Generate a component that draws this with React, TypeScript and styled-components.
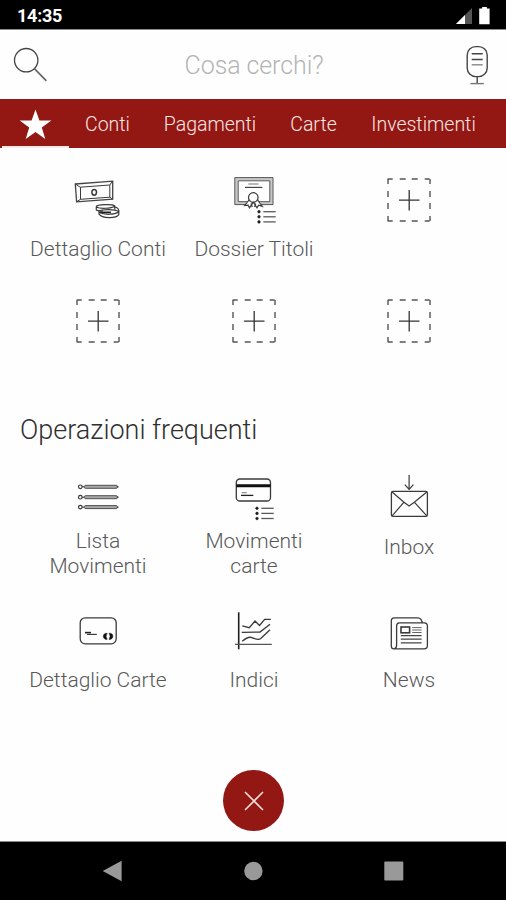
import React from "react";
import styled, { createGlobalStyle } from "styled-components";

const RED = "#931713";
const INK = "#3a3a3a";

const GlobalStyle = createGlobalStyle`
  * { box-sizing: border-box; }
  body { margin: 0; background: #fefefe; font-family: Roboto, "Liberation Sans", sans-serif; }
  svg { display: block; flex: none; }
`;

const Screen = styled.div`
  width: 506px;
  height: 900px;
  display: flex;
  flex-direction: column;
  background: #fefefe;
  overflow: hidden;
`;

const StatusBar = styled.header`
  height: 29px;
  flex: none;
  display: flex;
  align-items: center;
  justify-content: space-between;
  padding: 3px 16px 0 17px;
  background: #000;
`;

const Clock = styled.span`
  color: #fff;
  font-size: 18px;
  font-weight: 700;
  line-height: 20px;
  letter-spacing: -0.25px;
`;

const StatusIcons = styled.div`
  display: flex;
  gap: 7px;
  height: 24px;
`;

const SearchBar = styled.div`
  height: 70px;
  flex: none;
  display: flex;
  align-items: center;
  justify-content: space-between;
  padding: 0 17px 0 13px;
  border-top: 1px solid #8b8b8b;
`;

const Placeholder = styled.span`
  font-size: 25px;
  font-weight: 300;
  line-height: 30px;
  letter-spacing: -0.1px;
  color: #b4b4b4;
  margin: 3px 6px 0 0;
`;

const TabBar = styled.nav`
  height: 49px;
  flex: none;
  display: flex;
  padding-left: 2px;
  background: ${RED};
`;

const Tab = styled.div<{ $width: number; $active?: boolean }>`
  width: ${(p) => p.$width}px;
  flex: none;
  display: flex;
  align-items: center;
  justify-content: center;
  padding-top: 4px;
  border-bottom: 2px solid ${(p) => (p.$active ? "#fbe9e7" : "transparent")};
  color: #fbe6e4;
  font-size: 19.5px;
  font-weight: 300;
  white-space: nowrap;
`;

const Main = styled.main`
  flex: 1;
  display: flex;
  flex-direction: column;
  align-items: center;
`;

const TileGrid = styled.section<{ $rows: string; $top: number }>`
  display: grid;
  grid-template-columns: 156px 156px 154px;
  grid-template-rows: ${(p) => p.$rows};
  margin-top: ${(p) => p.$top}px;
  width: 466px;
`;

const TileBox = styled.div`
  display: flex;
  flex-direction: column;
  align-items: center;
`;

const Label = styled.span<{ $gap: number }>`
  margin-top: ${(p) => p.$gap}px;
  font-size: 21px;
  font-weight: 300;
  line-height: 25px;
  text-align: center;
  white-space: pre-line;
  color: #585858;
`;

const SectionTitle = styled.h2`
  align-self: flex-start;
  margin: 47px 0 0 20px;
  font-size: 27px;
  font-weight: 300;
  line-height: 32px;
  color: #303030;
`;

const CloseButton = styled.button`
  width: 61px;
  height: 61px;
  margin: auto 0 10px 1px;
  padding: 0;
  border: 0;
  border-radius: 50%;
  display: flex;
  align-items: center;
  justify-content: center;
  background: ${RED};
`;

const NavBar = styled.footer`
  height: 59px;
  flex: none;
  display: flex;
  align-items: center;
  justify-content: space-between;
  padding: 0 102px;
  border-top: 1px solid #8b8b8b;
  background: #000;
`;

function Glyph({ children, shift = 0 }: { children: React.ReactNode; shift?: number }) {
  return (
    <svg width="48" height="48" viewBox={`${-shift} 0 48 48`} fill="none" stroke={INK} strokeWidth="1.2">
      {children}
    </svg>
  );
}

function AddSlot() {
  return (
    <Glyph>
      <g stroke="#555" strokeWidth="1.4" strokeDasharray="5 7 6 6 6 7 5 0">
        <path d="M2.7 3H44.7" />
        <path d="M2.7 45H44.7" />
        <path d="M3 3V45" />
        <path d="M45 3V45" />
      </g>
      <path d="M14 24.2H34.5M24.2 14V34.5" stroke="#333" strokeWidth="1.3" />
    </Glyph>
  );
}

function Banknotes() {
  return (
    <Glyph>
      <path d="M1.3 8 38.7 5.2V23.2L2.6 25.8Z" stroke="#444" strokeWidth="1.3" />
      <path d="M1.3 8 6.2 11.2 35.8 9V21.2L6.5 23.3V11.2M35.8 9 38.7 5.2M38.7 23.2 35.8 21.2M2.6 25.8 6.5 23.3" strokeWidth="1" />
      <ellipse cx="20.2" cy="16.3" rx="2.3" ry="2.9" strokeWidth="1.5" />
      <path d="M22.3 30.5C23 28.6 38 27.8 40.8 30V33.6M22.3 30.5V34C24 35.4 27 35 29 34.8M22.3 31C26 33 37 32.6 40.8 30.2" />
      <path d="M25 35.2C28 33.2 41 33 44.8 35.6V38.6C42 42.8 28 42.6 25 38.2ZM25 36.2C30 39 40 39 44.8 36" />
      <path d="M26 36.4H37" strokeWidth="1.8" stroke="#222" />
      <path d="M40.5 31C44 31.5 45 33.5 44.8 35.6" />
    </Glyph>
  );
}

function ListMark({ x, y }: { x: number; y: number }) {
  return (
    <>
      {[0, 5.1, 10.2].map((d) => (
        <g key={d}>
          <circle cx={x} cy={y + d} r="1.3" fill="#222" stroke="#222" strokeWidth="0.6" />
          <path d={`M${x + 4.3} ${y + d}h12.4`} stroke="#5a5a5a" strokeWidth="1.3" />
        </g>
      ))}
    </>
  );
}

function Certificate() {
  return (
    <Glyph>
      <path d="M16 27.2H6.4V3H41.4V27.2H31" stroke="#c8c8c8" strokeWidth="3" />
      <path d="M15.5 28.6H4.8V1.6H43V28.6H31M17.5 25.7H8.2V4.8H39.8V25.7H29" stroke="#555" strokeWidth="1" />
      <path d="M18.3 8H28.5" stroke="#888" />
      <path d="M15 11.4H32.3" stroke="#444" />
      <circle cx="23.3" cy="21.5" r="4.8" />
      <path d="M19 24 14.7 29.5 18 29.2 19.5 31.8 23.3 26.2 27 31.8 28.6 29.2 32.3 30.4 27.7 24M21 27.5 22.3 31M25.7 27.5 24.5 31" />
      <ListMark x={29} y={35.7} />
    </Glyph>
  );
}

function BulletList() {
  return (
    <Glyph>
      {[13.8, 24.2, 34.1].map((y) => (
        <g key={y}>
          <circle cx="6.3" cy={y} r="1.8" strokeWidth="1.2" />
          <path d={`M8.2 ${y}h2`} />
          <rect x="10.6" y={y - 1.5} width="32.6" height="3" rx="0.8" fill="#a9a9a9" stroke="#505050" strokeWidth="1" />
          <path d={`M43 ${y}h1.6`} />
        </g>
      ))}
    </Glyph>
  );
}

function CardList() {
  return (
    <Glyph>
      <rect x="6.3" y="6" width="34.2" height="22" rx="3.6" strokeWidth="1.3" />
      <path d="M6.3 12.7H40.5" stroke="#111" strokeWidth="3" />
      <path d="M11 22.4H23.3" stroke="#222" strokeWidth="1.3" />
      <path d="M11.7 19.7H16.7" stroke="#888" />
      <ListMark x={27} y={35.3} />
    </Glyph>
  );
}

function Inbox() {
  return (
    <Glyph shift={0.8}>
      <rect x="5.6" y="18.4" width="36" height="25" rx="1.6" strokeWidth="1.3" />
      <path d="M6.3 19 18.2 29.2 23.3 33 28.5 29.2 41 19M18.2 29.2 6.3 42.8M28.5 29.2 41 42.8" />
      <path d="M23.3 2V16M19 11.6 23.3 16.3 27.6 11.6" />
    </Glyph>
  );
}

function CardDetail() {
  return (
    <Glyph>
      <rect x="6.2" y="10.8" width="36" height="26" rx="5" strokeWidth="1.3" />
      <path d="M11 25.6H17" stroke="#222" strokeWidth="1.6" />
      <path d="M13 27.4H22.8" />
      <path d="M33.2 26.3A3.1 3.1 0 1 0 33.2 32.3Q31 29.3 33.2 26.3ZM35 26.3A3.1 3.1 0 1 1 35 32.3Q37.2 29.3 35 26.3Z" fill="#111" stroke="#111" strokeWidth="0.5" />
    </Glyph>
  );
}

function Chart() {
  return (
    <Glyph>
      <path d="M8.7 5.3V42.3" stroke="#1e1e1e" strokeWidth="1.6" />
      <path d="M5 37.3H41.8" stroke="#555" strokeWidth="1.3" />
      <path d="M12.3 18.8 19.3 20.7 25 14 29.5 18.5 34.7 12.3H40.8M11.7 25.4 30 25 40 17.3M12.3 34.3C16 31 19 29.4 22 30.6S28 33.5 30.5 31.8L40 22.7" strokeWidth="1.3" />
    </Glyph>
  );
}

function Newspaper() {
  return (
    <Glyph shift={0.8}>
      <path d="M36.8 15.6 35 12.2Q34 10.9 32 10.9H8.5Q5.5 10.9 5.5 14V39Q5.5 41.9 8.2 41.9H38.4Q41.6 41.9 41.6 38.6V19.2Q41.6 15.8 38.4 15.8H13.6Q10.8 15.8 10.8 19V38Q10.8 41.5 8.4 41.9" strokeWidth="1.3" />
      <rect x="15.2" y="20" width="8.6" height="5.8" strokeWidth="1.6" />
      <path d="M26.4 20.6H35.8M26.4 23H35.8M26.4 25.5H35.8" stroke="#666" strokeWidth="1" />
      <path d="M15 28.7H35.8M15 32.2H35.8M15 35.9H35.8" stroke="#444" strokeWidth="1.3" />
    </Glyph>
  );
}

interface TileProps {
  icon: React.ReactNode;
  label?: string;
  gap?: number;
}

function Tile({ icon, label, gap = 13 }: TileProps) {
  return (
    <TileBox>
      {icon}
      {label && <Label $gap={gap}>{label}</Label>}
    </TileBox>
  );
}

export default function App() {
  return (
    <Screen>
      <GlobalStyle />
      <StatusBar>
        <Clock>14:35</Clock>
        <StatusIcons>
          <svg width="16" height="24" viewBox="0 0 16 24">
            <path d="M16 4V20H0Z" fill="#555" />
            <path d="M9 11V20H0Z" fill="#fff" />
          </svg>
          <svg width="11" height="24" viewBox="0 0 11 24">
            <path d="M3.2 3H7.8V4.6H10.6V20.2H0.2V4.6H3.2Z" fill="#fff" />
          </svg>
        </StatusIcons>
      </StatusBar>
      <SearchBar>
        <svg width="36" height="36" viewBox="0 0 36 36" fill="none" stroke="#444" strokeWidth="1.3">
          <circle cx="13.2" cy="13.2" r="11.7" />
          <path d="M21.4 21.6 33.4 33.8" stroke="#666" strokeWidth="1.7" />
        </svg>
        <Placeholder>Cosa cerchi?</Placeholder>
        <svg width="24" height="40" viewBox="0 0 24 40" fill="none" stroke="#444" strokeWidth="1.4">
          <rect x="2.2" y="1.6" width="20" height="30" rx="8.5" />
          <path d="M6.7 8.7H17.7M6.7 14.5H17.7" />
          <path d="M6.7 19.8H17.7" stroke="#888" />
          <path d="M12.2 31.6V38.4" />
          <path d="M5.4 38.6H18.8" stroke="#777" />
        </svg>
      </SearchBar>
      <TabBar>
        <Tab $width={67} $active>
          <svg width="33" height="31" viewBox="0 0 32 30" fill="#fff">
            <path d="M16 0.5 19.8 11H31.4L22.1 17.8 25.5 29 16 22.2 6.5 29 9.9 17.8 0.6 11H12.2Z" />
          </svg>
        </Tab>
        <Tab $width={77}>Conti</Tab>
        <Tab $width={128}>Pagamenti</Tab>
        <Tab $width={79}>Carte</Tab>
        <Tab $width={141}>Investimenti</Tab>
      </TabBar>
      <Main>
        <TileGrid $rows="121px 70px" $top={28}>
          <Tile icon={<Banknotes />} label="Dettaglio Conti" />
          <Tile icon={<Certificate />} label="Dossier Titoli" />
          <Tile icon={<AddSlot />} />
          <Tile icon={<AddSlot />} />
          <Tile icon={<AddSlot />} />
          <Tile icon={<AddSlot />} />
        </TileGrid>
        <SectionTitle>Operazioni frequenti</SectionTitle>
        <TileGrid $rows="134px 90px" $top={27}>
          <Tile icon={<BulletList />} label={"Lista\nMovimenti"} gap={8} />
          <Tile icon={<CardList />} label={"Movimenti\ncarte"} gap={8} />
          <Tile icon={<Inbox />} label="Inbox" gap={14} />
          <Tile icon={<CardDetail />} label="Dettaglio Carte" />
          <Tile icon={<Chart />} label="Indici" />
          <Tile icon={<Newspaper />} label="News" />
        </TileGrid>
        <CloseButton aria-label="Chiudi">
          <svg width="22" height="22" viewBox="0 0 22 22" stroke="#f8dcd8" strokeWidth="1.6">
            <path d="M2 2 20 20M20 2 2 20" />
          </svg>
        </CloseButton>
      </Main>
      <NavBar>
        <svg width="20" height="22" viewBox="0 0 20 22"><path d="M0.7 11 19.6 0.8V21.2Z" fill="#999" /></svg>
        <svg width="20" height="20" viewBox="0 0 20 20"><circle cx="10.4" cy="10" r="9.2" fill="#999" /></svg>
        <svg width="20" height="20" viewBox="0 0 20 20"><rect x="0.3" y="0.5" width="19" height="19" rx="1" fill="#999" /></svg>
      </NavBar>
    </Screen>
  );
}
